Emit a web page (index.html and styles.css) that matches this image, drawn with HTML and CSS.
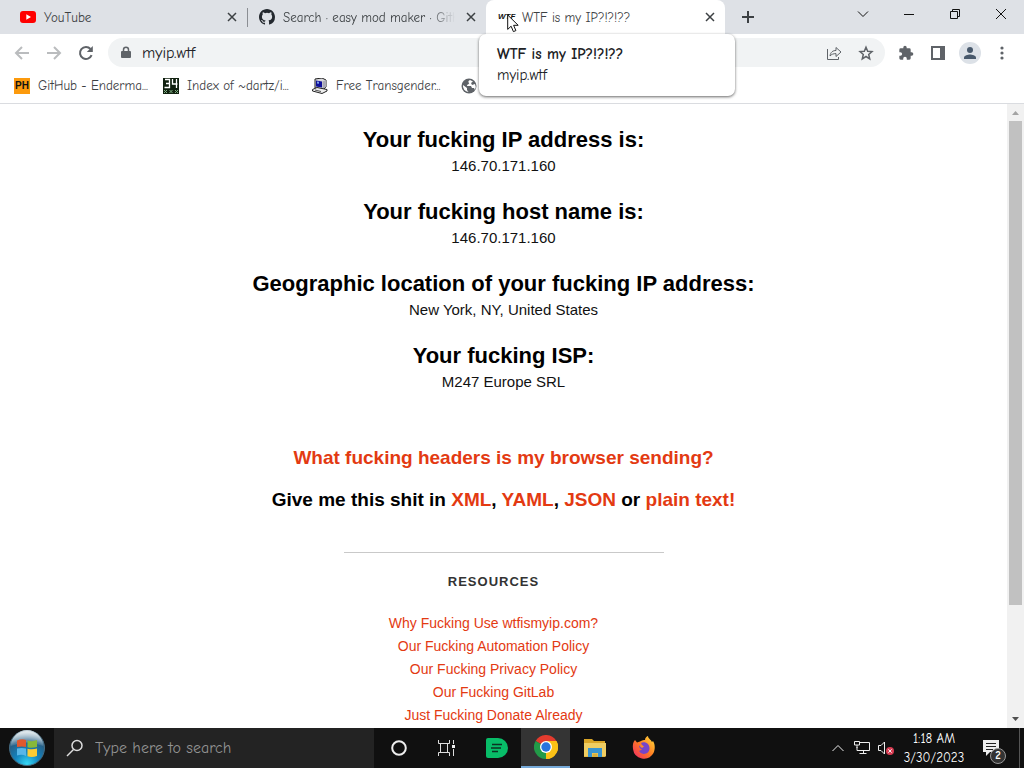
FILE: index.html
```html
<!DOCTYPE html>
<html lang="en">
<head>
  <meta charset="UTF-8" />
  <meta name="viewport" content="width=device-width, initial-scale=1.0"/>
  <title>WTF is my IP?!?!??</title>
  <link rel="stylesheet" href="styles.css">
</head>
<body>
  <header class="browser">
    <div class="tab-strip">
      <div class="tab">
        <svg class="icon" viewBox="0 0 16 16"><rect y="2" width="16" height="12" rx="3" fill="#f00"/><path d="M6.3 5.3v5.4L11 8z" fill="#fff"/></svg>
        <span class="tab-title">YouTube</span>
        <button class="tab-close" aria-label="Close YouTube"><svg viewBox="0 0 10 10"><path d="M1 1l8 8M9 1L1 9"/></svg></button>
      </div>
      <div class="tab divided">
        <svg class="icon" viewBox="0 0 16 16"><path fill="#24292f" d="M8 0C3.58 0 0 3.58 0 8c0 3.54 2.29 6.53 5.47 7.59.4.07.55-.17.55-.38v-1.49c-2.01.37-2.53-.49-2.69-.94-.09-.23-.48-.94-.82-1.13-.28-.15-.68-.52-.01-.53.63-.01 1.08.58 1.23.82.72 1.21 1.87.87 2.33.66.07-.52.28-.87.51-1.07-1.78-.2-3.64-.89-3.64-3.95 0-.87.31-1.59.82-2.15-.08-.2-.36-1.02.08-2.12 0 0 .67-.21 2.2.82a7.42 7.42 0 0 1 4 0c1.53-1.04 2.2-.82 2.2-.82.44 1.1.16 1.92.08 2.12.51.56.82 1.27.82 2.15 0 3.07-1.87 3.75-3.65 3.95.29.25.54.73.54 1.48v2.2c0 .21.15.46.55.38A8.01 8.01 0 0 0 16 8c0-4.42-3.58-8-8-8z"/></svg>
        <span class="tab-title faded">Search · easy mod maker · GitH</span>
        <button class="tab-close" aria-label="Close Search"><svg viewBox="0 0 10 10"><path d="M1 1l8 8M9 1L1 9"/></svg></button>
      </div>
      <div class="tab active">
        <span class="icon wtf-icon">WTF</span>
        <span class="tab-title">WTF is my IP?!?!??</span>
        <button class="tab-close" aria-label="Close WTF is my IP"><svg viewBox="0 0 10 10"><path d="M1 1l8 8M9 1L1 9"/></svg></button>
        <div class="tab-card" role="tooltip">
          <strong>WTF is my IP?!?!??</strong>
          <span>myip.wtf</span>
        </div>
        <svg class="cursor" viewBox="0 0 12 19"><path d="M.7 1v14.4l3.4-3.2 2.3 5.4 2.5-1-2.3-5.3h4.6z" fill="#fff" stroke="#111"/></svg>
      </div>
      <button class="new-tab" aria-label="New tab"><svg viewBox="0 0 12 12"><path d="M6 0v12M0 6h12"/></svg></button>
      <div class="window-controls">
        <button aria-label="Search tabs"><svg viewBox="0 0 12 12"><path d="M1 3.5l5 5 5-5"/></svg></button>
        <button aria-label="Minimize"><svg viewBox="0 0 12 12"><path d="M1 6.5h10"/></svg></button>
        <button aria-label="Restore"><svg viewBox="0 0 12 12"><path d="M1.5 3.5h7v7h-7zM3.5 3.5v-2h7v7h-2"/></svg></button>
        <button aria-label="Close window"><svg viewBox="0 0 12 12"><path d="M1 1l10 10M11 1L1 11"/></svg></button>
      </div>
    </div>

    <div class="toolbar">
      <button class="tool disabled" aria-label="Back"><svg viewBox="0 0 16 16"><path d="M15 8H2M8 2L2 8l6 6"/></svg></button>
      <button class="tool disabled" aria-label="Forward"><svg viewBox="0 0 16 16"><path d="M1 8h13M8 2l6 6-6 6"/></svg></button>
      <button class="tool" aria-label="Reload"><svg viewBox="0 0 16 16"><path d="M13.6 10.2A6 6 0 1 1 12.5 4"/><path class="solid" d="M14.8 1v6H8.8z"/></svg></button>
      <div class="omnibox">
        <svg class="lock" viewBox="0 0 10 14"><path d="M2.5 6V3.8a2.5 2.5 0 0 1 5 0V6" fill="none" stroke="#5f6368" stroke-width="1.5"/><rect y="5" width="10" height="7" rx="1" fill="#5f6368"/></svg>
        <input class="address" type="text" value="myip.wtf" aria-label="Address">
        <button class="tool" aria-label="Share"><svg class="thin" viewBox="0 0 16 16"><path d="M1.5 4v10.5h11V12M4 11c.5-4 3-5.5 6-5.5v-3L15 7l-5 4.5V8.6c-2.500 0-4.500.6-6 2.400z"/></svg></button>
        <button class="tool" aria-label="Bookmark this tab"><svg class="star" viewBox="0 0 16 16"><path d="M8 2.200l1.700 4 4.300.4-3.300 2.900 1 4.300L8 11.500l-3.700 2.300 1-4.300L2 6.600l4.300-.4z"/></svg></button>
      </div>
      <button class="tool" aria-label="Extensions"><svg viewBox="0 0 24 24"><path class="solid" d="M20.500 11H19V7a2 2 0 0 0-2-2h-4V3.500a2.500 2.500 0 0 0-5 0V5H4a2 2 0 0 0-2 2v3.800h1.500a2.700 2.700 0 0 1 0 5.400H2V20a2 2 0 0 0 2 2h3.800v-1.500a2.700 2.700 0 0 1 5.400 0V22H17a2 2 0 0 0 2-2v-4h1.500a2.500 2.500 0 0 0 0-5z"/></svg></button>
      <button class="tool" aria-label="Side panel"><svg viewBox="0 0 16 16"><path d="M2 2h12v12H2z"/><path class="solid" d="M10 2h4v12h-4z"/></svg></button>
      <button class="tool avatar" aria-label="Profile"><svg viewBox="0 0 22 22"><circle cx="11" cy="11" r="11" fill="#dce1e7"/><circle cx="11" cy="8" r="3" fill="#47586b"/><path d="M5 17v-1.500c0-2 4-3 6-3s6 1 6 3V17z" fill="#47586b"/></svg></button>
      <button class="tool" aria-label="Menu"><svg viewBox="0 0 16 16"><g class="solid"><circle cx="8" cy="3" r="1.600"/><circle cx="8" cy="8" r="1.600"/><circle cx="8" cy="13" r="1.600"/></g></svg></button>
    </div>

    <nav class="bookmarks">
      <a href="#">
        <span class="icon ph-icon">PH</span>
        <span>GitHub - Enderma...</span>
      </a>
      <a href="#">
        <svg class="icon index-icon" viewBox="0 0 16 16"><rect width="16" height="16" fill="#10200f"/><path d="M2 1.500h4.500v8H1.500M3 5.500h3M9.500 1v5h5M13.500 1v9" fill="none" stroke="#fff" stroke-width="1.300"/><path d="M1 12l3 3M4 12l-3 3M6.500 12l3 3M9.500 12l-3 3M12 12l3 3M15 12l-3 3" stroke="#7fae83"/></svg>
        <span>Index of ~dartz/i...</span>
      </a>
      <a href="#">
        <svg class="icon" viewBox="0 0 16 16"><path d="M3 1l7-1 4 2v7l-3 3-8-2z" fill="#d8d8dc" stroke="#222"/><path d="M4 2.500l6 1v6l-6-1z" fill="#10109a"/><path d="M5 3.500l2 .3v2l-2-.3z" fill="#7da0e8"/><path d="M10.500 3.500L14 2v7l-3.500 2.500z" fill="#a9a9b5"/><path d="M.5 11.500L5 9.500l10 2v1.500l-5 2.500-9.500-2.500z" fill="#eee" stroke="#222"/><path d="M3 12l6 1.500" stroke="#555"/></svg>
        <span>Free Transgender...</span>
      </a>
      <a href="#" aria-label="Website">
        <svg class="icon" viewBox="0 0 16 16"><circle cx="8" cy="8" r="7.500" fill="#5f6368"/><path d="M2 7l4 3v2l1.500 2A6 6 0 0 1 2 7zM9 2c-2 1-2 2-1 3s-2 1-2 3h4l1 2h2l1 2A6.500 6.500 0 0 0 14 6l-3 1-1-2 2-1.500z" fill="#fff"/></svg>
      </a>
    </nav>
  </header>

  <div class="viewport">
    <main class="page">
      <dl class="facts">
        <dt>Your fucking IP address is:</dt>
        <dd>146.70.171.160</dd>
        <dt>Your fucking host name is:</dt>
        <dd>146.70.171.160</dd>
        <dt>Geographic location of your fucking IP address:</dt>
        <dd>New York, NY, United States</dd>
        <dt>Your fucking ISP:</dt>
        <dd>M247 Europe SRL</dd>
      </dl>

      <div class="formats">
        <h2><a href="#">What fucking headers is my browser sending?</a></h2>
        <h2>Give me this shit in <a href="#">XML</a>, <a href="#">YAML</a>, <a href="#">JSON</a> or <a href="#">plain text!</a></h2>
      </div>

      <section class="resources">
        <h3>RESOURCES</h3>
        <ul>
          <li><a href="#">Why Fucking Use wtfismyip.com?</a></li>
          <li><a href="#">Our Fucking Automation Policy</a></li>
          <li><a href="#">Our Fucking Privacy Policy</a></li>
          <li><a href="#">Our Fucking GitLab</a></li>
          <li><a href="#">Just Fucking Donate Already</a></li>
        </ul>
      </section>
    </main>
    <div class="scrollbar">
      <svg viewBox="0 0 17 17"><path d="M5 11l3.500-4 3.500 4z" fill="#a3a3a3"/></svg>
      <div class="track"><div class="thumb"></div></div>
      <svg viewBox="0 0 17 17"><path d="M5 6l3.500 4L12 6z" fill="#505050"/></svg>
    </div>
  </div>

  <footer class="taskbar">
    <button class="start" aria-label="Start">
      <svg viewBox="0 0 36 36">
        <defs>
          <radialGradient id="orb" cx="50%" cy="95%" r="90%"><stop offset="0" stop-color="#35d8f5"/><stop offset=".4" stop-color="#1382bd"/><stop offset=".75" stop-color="#265f86"/><stop offset="1" stop-color="#a8c0cc"/></radialGradient>
          <linearGradient id="shine" x2="0" y2="1"><stop offset="0" stop-color="#fff" stop-opacity=".7"/><stop offset="1" stop-color="#fff" stop-opacity=".1"/></linearGradient>
        </defs>
        <circle cx="18" cy="18" r="17.500" fill="url(#orb)" stroke="#456b80"/>
        <path d="M2 16a16 16 0 0 1 32 0q-16-7-32 0z" fill="url(#shine)"/>
        <path d="M8 10.500q5-2 9-.5v7q-4-1-9 0z" fill="#e0582e"/>
        <path d="M18.500 10.500q5 1.500 9.500-.5v7q-5 1.500-9.500.3z" fill="#86b83a"/>
        <path d="M8 18.500q5-1 9 0v7.500q-4-2-9-.5z" fill="#58b6e8"/>
        <path d="M18.500 18.800q5 1.200 9.500-.3V26q-5 2-9.500.3z" fill="#fccb34"/>
      </svg>
    </button>
    <label class="search">
      <svg viewBox="0 0 18 18"><circle cx="11" cy="6.500" r="5"/><path d="M7.500 10.500L1 17"/></svg>
      <input type="text" placeholder="Type here to search" aria-label="Search">
    </label>
    <div class="apps">
      <button aria-label="Cortana"><svg viewBox="0 0 24 24"><circle cx="12" cy="12" r="6.800" fill="none" stroke="#eee" stroke-width="2"/></svg></button>
      <button aria-label="Task view"><svg viewBox="0 0 24 24"><path d="M2.500 4v3.500h11V4M2.500 20v-3.500h11V20M4.500 7.500v9M11.500 7.500v9M17.500 4v4M17.500 13v7" fill="none" stroke="#ddd"/><path d="M16 9h3v3h-3z" fill="#eee"/></svg></button>
      <button aria-label="Notes"><svg viewBox="0 0 24 24"><path d="M3 2h10a10 10 0 0 1 0 20H3a2 2 0 0 1-2-2V4a2 2 0 0 1 2-2z" fill="#08bd68"/><path d="M7 8.500h10M6 12h10M7 15.500h6" stroke="#0b3322" stroke-width="1.500"/></svg></button>
      <button class="running" aria-label="Chrome"><svg viewBox="0 0 24 24"><path d="M12 12L1.600 6a12 12 0 0 1 20.800 0z" fill="#e33b2e"/><path d="M12 12L22.400 6A12 12 0 0 1 12 24z" fill="#fbc116"/><path d="M12 12v12A12 12 0 0 1 1.600 6z" fill="#229a48"/><path d="M12 6h10.400a12 12 0 0 1-10.400 18l5.200-9z" fill="#fbc116"/><circle cx="12" cy="12" r="6" fill="#fff"/><circle cx="12" cy="12" r="4.700" fill="#2874dd"/></svg></button>
      <button aria-label="File Explorer"><svg viewBox="0 0 24 24"><path d="M1 3h8l2 2h11v16H1z" fill="#d9a527"/><path d="M1 7h22v13.500H1z" fill="#efcd62"/><path d="M5 12h14v9h-4v-4H9v4H5z" fill="#3994d0"/><path d="M9.500 17.500h5V21h-5z" fill="#d8ae3c"/></svg></button>
      <button aria-label="Firefox"><svg viewBox="0 0 24 24">
        <defs><linearGradient id="fox" x1="1" x2="0" y2="1"><stop offset="0" stop-color="#ffe33c"/><stop offset=".5" stop-color="#ff7b22"/><stop offset="1" stop-color="#f0236c"/></linearGradient></defs>
        <path d="M3 4l2 2.500L8 5.500C10 4 12 4 13 4c0-2 1.500-3.500 3-4 0 2.500 3 3.500 4 6l1-1c2 3 2.500 8 .5 12A11 11 0 0 1 1 13C.5 9 1 6 3 4z" fill="url(#fox)"/>
        <path d="M9 7c4-2 9 1 8.500 6A5.600 5.600 0 0 1 7 15l3-1.500c-2-1-3-2-3-4l3-.5z" fill="#7545c9"/>
        <path d="M7 9.500l3-.5 2 1.500-2 1.500z" fill="#ff8b26"/>
      </svg></button>
    </div>
    <div class="tray">
      <button aria-label="Show hidden icons"><svg viewBox="0 0 16 16"><path d="M2.500 11L8 5.500l5.500 5.500"/></svg></button>
      <button aria-label="Network"><svg viewBox="0 0 16 16"><path d="M6 2.500h9.500v8H3V7M9.500 10.500v3M5.500 13.500h7M.5 1.500h5V5h-5zM3 5v3"/></svg></button>
      <button aria-label="Muted"><svg viewBox="0 0 16 16"><path d="M.5 5.500H3l3.500-3.500v12L3 10.500H.5z"/><circle cx="12" cy="11" r="4" fill="#d83c52" stroke="none"/><path d="M10.300 9.300l3.400 3.400M13.700 9.300l-3.400 3.400"/></svg></button>
      <button class="clock"><span>1:18 AM</span><span>3/30/2023</span></button>
      <button class="notifications" aria-label="2 notifications">
        <svg viewBox="0 0 18 18"><path d="M1 1h16v12H8l-4 4v-4H1z" fill="#eee" stroke="none"/><path d="M4 4.500h10M4 7.500h10M4 10.500h7" stroke="#222"/></svg>
        <span class="badge">2</span>
      </button>
      <button class="show-desktop" aria-label="Show desktop"></button>
    </div>
  </footer>
</body>
</html>
```
FILE: styles.css
```css
:root {
  --ui-font: "Comic Sans MS", "Comic Neue", "Noto Sans", sans-serif;
  --page-font: "Liberation Sans", Arial, sans-serif;
  --frame: #dee1e6;
  --icon: #5f6368;
  --link: #e33a12;
}

* {
  box-sizing: border-box;
  margin: 0;
  padding: 0;
}

body {
  height: 100vh;
  display: flex;
  flex-direction: column;
  overflow: hidden;
  background: #fff;
  font-family: var(--ui-font);
  font-size: 13px;
  color: #3c4043;
}

a {
  color: inherit;
  text-decoration: none;
}

button,
input {
  border: none;
  outline: none;
  background: transparent;
  font: inherit;
  color: inherit;
}

button {
  display: flex;
  align-items: center;
  justify-content: center;
}

svg {
  display: block;
  flex: none;
}

.icon {
  width: 16px;
  height: 16px;
  flex: none;
}

/* tabs */
.tab-strip {
  display: flex;
  height: 34px;
  padding-left: 8px;
  background: var(--frame);
}

.tab {
  position: relative;
  display: flex;
  align-items: center;
  gap: 8px;
  flex: 0 1 239px;
  min-width: 0;
  padding: 0 7px 0 12px;
}

.tab.divided::before {
  content: "";
  position: absolute;
  left: 0;
  top: 8px;
  width: 1px;
  height: 19px;
  background: #8b8e93;
}

.tab.active {
  background: #fff;
  border-radius: 8px 8px 0 0;
}

.tab-title {
  flex: 1;
  min-width: 0;
  white-space: nowrap;
}

.faded {
  -webkit-mask-image: linear-gradient(to right, #000 85%, transparent);
  mask-image: linear-gradient(to right, #000 85%, transparent);
}

.wtf-icon {
  font: italic bold 8px/16px var(--page-font);
  color: #111;
}

.tab-close {
  width: 16px;
  height: 16px;
}

.tab-close svg {
  width: 10px;
  height: 10px;
  fill: none;
  stroke: #3c4043;
  stroke-width: 1.5;
}

.new-tab {
  width: 46px;
}

.new-tab svg {
  width: 12px;
  height: 12px;
  stroke: #3c4043;
  stroke-width: 2;
}

.window-controls {
  display: flex;
  height: 28px;
  margin-left: auto;
}

.window-controls button {
  width: 46px;
}

.window-controls svg {
  width: 12px;
  height: 12px;
  fill: none;
  stroke: #111;
}

.tab-card {
  position: absolute;
  z-index: 2;
  top: 34px;
  left: -7px;
  display: flex;
  flex-direction: column;
  width: 256px;
  padding: 10px 18px;
  border-radius: 7px;
  background: #fff;
  box-shadow: 0 1px 3px rgba(0, 0, 0, 0.6);
  color: #202124;
  font-size: 15px;
  line-height: 21px;
}

.cursor {
  position: absolute;
  z-index: 3;
  top: 14px;
  left: 21px;
  width: 12px;
  height: 19px;
}

/* toolbar */
.toolbar {
  display: flex;
  align-items: center;
  height: 37px;
  padding: 0 6px;
}

.tool {
  width: 32px;
  height: 28px;
  flex: none;
}

.tool svg {
  width: 16px;
  height: 16px;
  fill: none;
  stroke: var(--icon);
  stroke-width: 2;
}

.tool .solid {
  fill: var(--icon);
  stroke: none;
}

.tool svg.thin {
  stroke-width: 1;
}

.tool svg.star {
  stroke-width: 1.5;
}

.tool.disabled svg {
  stroke: #babcbe;
}

.tool.avatar svg {
  width: 22px;
  height: 22px;
  stroke: none;
}

.omnibox {
  display: flex;
  align-items: center;
  flex: 1;
  height: 29px;
  margin: 0 5px 0 6px;
  padding: 0 3px 0 13px;
  border-radius: 15px;
  background: #f1f3f4;
}

.lock {
  width: 10px;
  height: 14px;
}

.address {
  flex: 1;
  min-width: 0;
  padding-left: 11px;
  font-size: 16px;
  color: #202124;
}

.bookmarks {
  display: flex;
  align-items: center;
  gap: 16px;
  height: 33px;
  padding: 0 14px 3px;
  border-bottom: 1px solid #dadce0;
}

.bookmarks a {
  display: flex;
  align-items: center;
  gap: 8px;
  flex: 0 0 133px;
  min-width: 0;
  white-space: nowrap;
}

.ph-icon {
  background: #fc9a0d;
  color: #111;
  font: bold 10px/16px var(--page-font);
  text-align: center;
}

/* page */
.viewport {
  display: flex;
  flex: 1;
  min-height: 0;
}

.page {
  flex: 1;
  overflow: hidden;
  padding-top: 22px;
  font-family: var(--page-font);
  font-size: 15px;
  color: #111;
  text-align: center;
}

.facts dt {
  font-size: 22px;
  font-weight: bold;
  line-height: 28px;
  color: #000;
}

.facts dd {
  margin-bottom: 20px;
  line-height: 24px;
}

.formats {
  display: flex;
  flex-direction: column;
  gap: 12px;
  margin-top: 49px;
}

.formats h2 {
  font-size: 19px;
  line-height: 30px;
  color: #000;
}

.page a {
  color: var(--link);
}

.resources {
  width: 320px;
  margin: 37px auto 0;
  padding: 17px 20px 0 0;
  border-top: 1px solid #c9c9c9;
}

.resources h3 {
  margin-bottom: 18px;
  font-size: 13px;
  line-height: 24px;
  letter-spacing: 1px;
  color: #333;
}

.resources ul {
  list-style: none;
  font-size: 14px;
  line-height: 23px;
}

.scrollbar {
  display: flex;
  flex-direction: column;
  width: 17px;
  background: #f1f1f1;
}

.scrollbar svg {
  width: 17px;
  height: 17px;
}

.track {
  flex: 1;
  padding: 0 2px;
}

.thumb {
  height: 82%;
  background: #c1c1c1;
}

/* taskbar */
.taskbar {
  display: flex;
  height: 40px;
  background: #101010;
  color: #fff;
}

.start {
  width: 54px;
}

.start svg {
  width: 36px;
  height: 36px;
}

.search {
  display: flex;
  align-items: center;
  gap: 11px;
  flex: 0 1 320px;
  padding-left: 12px;
  background: #232323;
}

.search svg {
  width: 18px;
  height: 18px;
  fill: none;
  stroke: #ddd;
  stroke-width: 1.5;
}

.search input {
  flex: 1;
  min-width: 0;
  font-size: 16px;
}

.search input::placeholder {
  color: #929292;
}

.apps {
  display: flex;
}

.apps button {
  width: 49px;
}

.apps svg {
  width: 24px;
  height: 24px;
}

.apps .running {
  background: #343434;
  border-bottom: 2px solid #76a9d8;
}

.tray {
  display: flex;
  margin-left: auto;
}

.tray button {
  width: 24px;
}

.tray svg {
  width: 16px;
  height: 16px;
  fill: none;
  stroke: #eee;
}

.tray .clock {
  width: 72px;
  flex-direction: column;
  line-height: 19px;
}

.tray .notifications {
  position: relative;
  width: 42px;
  margin-right: 7px;
}

.tray .notifications svg {
  width: 18px;
  height: 18px;
}

.tray .show-desktop {
  width: 5px;
  border-left: 1px solid #555;
}

.badge {
  position: absolute;
  right: 6px;
  bottom: 4px;
  width: 16px;
  height: 16px;
  border: 1px solid #999;
  border-radius: 50%;
  background: #333;
  font-size: 11px;
  font-weight: bold;
  line-height: 14px;
}
```
